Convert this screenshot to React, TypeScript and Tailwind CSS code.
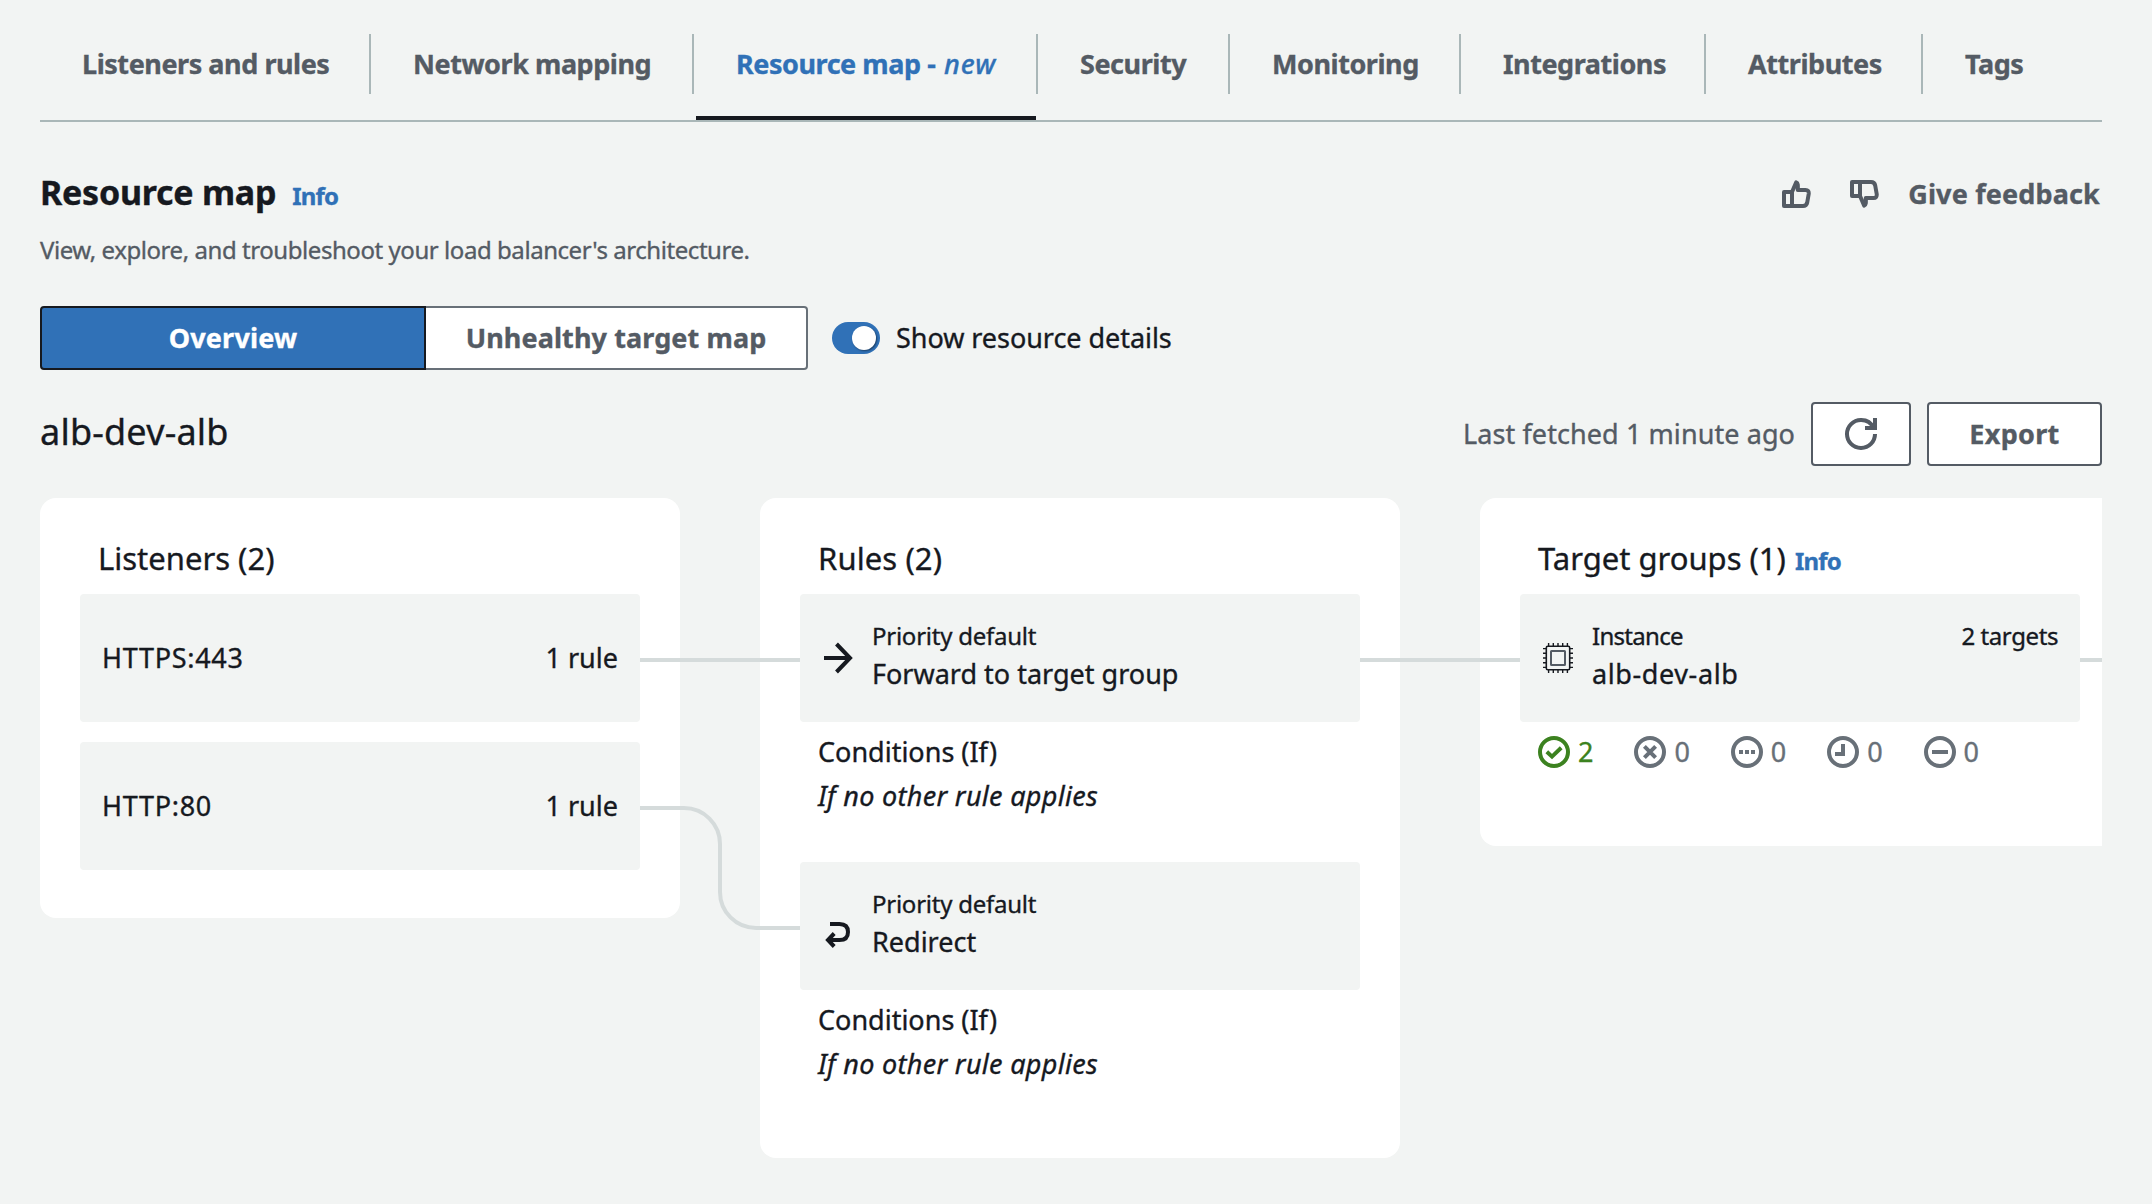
import type { ReactNode } from "react";

const tabs: { label: ReactNode; width: string; active?: boolean }[] = [
  { label: "Listeners and rules", width: "w-[331px]" },
  { label: "Network mapping", width: "w-[323px]" },
  {
    label: (
      <>
        Resource map - <em className="ml-[2px] font-medium tracking-[1.1px]">new</em>
      </>
    ),
    width: "w-[344px]",
    active: true,
  },
  { label: "Security", width: "w-[192px]" },
  { label: "Monitoring", width: "w-[231px]" },
  { label: "Integrations", width: "w-[245px]" },
  { label: "Attributes", width: "w-[217px]" },
  { label: "Tags", width: "w-[178px]" },
];

function Tabs() {
  return (
    <nav className="flex h-[122px] shrink-0 border-b-2 border-[#aab7b8]">
      {tabs.map((tab, i) => (
        <div key={i} className={`${tab.width} flex shrink-0 flex-col pt-[34px]`}>
          <div
            className={`flex h-[60px] items-center pl-[42px] text-[27px] font-bold tracking-[-0.45px] whitespace-nowrap ${
              tab.active ? "text-[#3071b7]" : "text-[#545b64]"
            } ${i < tabs.length - 1 ? "border-r-2 border-[#aab7b8]" : ""}`}
          >
            <span>{tab.label}</span>
          </div>
          {tab.active && <div className="mt-[22px] mr-[2px] ml-[2px] h-1 bg-[#16191f]" />}
        </div>
      ))}
    </nav>
  );
}

function ThumbIcon({ down = false }: { down?: boolean }) {
  return (
    <svg
      viewBox="0 0 29 28"
      className={`h-[28px] w-[29px] ${down ? "-scale-y-100" : ""}`}
      fill="none"
      stroke="#545b64"
      strokeWidth="4"
      strokeLinejoin="round"
    >
      <path d="M2 12H10L14.2 2.4C16 3 16 5 15.8 10H23.5C26 10 27 11.5 26.7 14L25.2 22.5C24.7 25 23.5 26 21 26H2Z" />
      <path d="M10 12V26" />
    </svg>
  );
}

function RefreshIcon() {
  return (
    <svg viewBox="0 0 16 16" className="size-8" fill="none" stroke="#545b64" strokeWidth="2">
      <path d="M10 5h5V0" />
      <path d="M15 8a6.957 6.957 0 0 1-7 7 6.957 6.957 0 0 1-7-7 6.957 6.957 0 0 1 7-7 6.87 6.87 0 0 1 6.3 4" />
    </svg>
  );
}

function ForwardIcon() {
  return (
    <svg viewBox="0 0 32 32" className="size-8" fill="none" stroke="#16191f" strokeWidth="4">
      <path d="M2 16H27M14.5 2L28 16L14.5 30" />
    </svg>
  );
}

function RedirectIcon() {
  return (
    <svg viewBox="0 0 32 32" className="size-8" fill="none" stroke="#16191f" strokeWidth="4">
      <path d="M8 6H17.5C23.5 6 26 9 26 14C26 19 23.5 22 17.5 22H7" />
      <path d="M12.2 15.5L6 22L12.2 28.5" />
    </svg>
  );
}

function ChipIcon() {
  const pins = [5.6, 10.3, 15, 19.7, 24.4];
  return (
    <svg viewBox="0 0 30 30" className="size-[30px]" fill="none" stroke="#16191f" strokeWidth="1.6">
      <rect x="3.3" y="3.3" width="23.4" height="23.4" rx="1.5" />
      <rect x="8" y="8" width="14" height="14" rx="0.5" stroke="#545b64" strokeWidth="2" />
      {pins.map((p) => (
        <path key={p} d={`M${p} 0V3M${p} 27V30M0 ${p}H3M27 ${p}H30`} strokeWidth="1.4" />
      ))}
    </svg>
  );
}

function Item({ children }: { children: ReactNode }) {
  return <div className="flex h-32 rounded bg-[#f2f4f3] pr-[22px] pl-5">{children}</div>;
}

function Card({ size, title, children }: { size: string; title: ReactNode; children: ReactNode }) {
  return (
    <section className={`${size} w-[640px] shrink-0 rounded-2xl bg-white px-10`}>
      <h3 className="h-24 pt-10 pl-[18px] text-[31px] leading-10 whitespace-nowrap">{title}</h3>
      {children}
    </section>
  );
}

function Listener({ name }: { name: string }) {
  return (
    <Item>
      <div className="flex flex-1 items-center justify-between pl-[2px] text-[27px]">
        <span className="tracking-[0.7px]">{name}</span>
        <span>1 rule</span>
      </div>
    </Item>
  );
}

function Rule({ icon, action }: { icon: ReactNode; action: string }) {
  return (
    <div className="mb-11">
      <Item>
        <div className="flex w-[52px] items-center pl-[2px]">{icon}</div>
        <div className="pt-6">
          <p className="text-[24px] leading-9 tracking-[-0.25px]">Priority default</p>
          <p className="text-[27px] leading-10">{action}</p>
        </div>
      </Item>
      <div className="pt-[7px] pl-[18px] text-[27px]">
        <p className="leading-[45px]">Conditions (If)</p>
        <p className="leading-[44px] tracking-[0.3px] italic">If no other rule applies</p>
      </div>
    </div>
  );
}

const statuses: { count: number; shape: ReactNode; color: string }[] = [
  { count: 2, shape: <path d="M4.4 7.9l2.6 2.4 4.6-4.4" />, color: "text-[#3c8220]" },
  { count: 0, shape: <path d="M10.8 5.2l-5.6 5.6M5.2 5.2l5.6 5.6" />, color: "text-[#687078]" },
  { count: 0, shape: <path d="M4 8h2M7 8h2M10 8h2" />, color: "text-[#687078]" },
  { count: 0, shape: <path d="M8 4v5H4" />, color: "text-[#687078]" },
  { count: 0, shape: <path d="M4 8h8" />, color: "text-[#687078]" },
];

function Connectors() {
  return (
    <svg
      className="pointer-events-none absolute top-0 left-0 h-[660px] w-[2062px]"
      viewBox="0 0 2062 660"
      fill="none"
      stroke="#d5dbdb"
      strokeWidth="4"
    >
      <path d="M600 162H760M1320 162H1480M2040 162H2062" />
      <path d="M600 310H644A36 36 0 0 1 680 346V394A36 36 0 0 0 716 430H760" />
    </svg>
  );
}

export default function App() {
  return (
    <main className="flex h-[1204px] w-[2152px] flex-col overflow-hidden bg-[#f2f4f3] pr-[50px] pl-10 font-['Noto_Sans',sans-serif] text-[#16191f] [-webkit-text-stroke:0.35px]">
      <Tabs />

      <header className="mt-12 flex h-11 shrink-0 items-center justify-between">
        <div className="flex items-baseline">
          <h1 className="text-[34px] leading-[44px] font-bold tracking-[-0.25px]">Resource map</h1>
          <a className="ml-4 text-[24px] font-bold tracking-[-0.8px] text-[#3071b7]">Info</a>
        </div>
        <div className="flex items-center pt-1 pr-[2px]">
          <ThumbIcon />
          <span className="w-[39px]" />
          <ThumbIcon down />
          <span className="ml-[29px] text-[27px] leading-10 font-bold tracking-[0.15px] text-[#545b64]">
            Give feedback
          </span>
        </div>
      </header>
      <p className="mt-[18px] text-[24px] leading-9 tracking-[-0.44px] text-[#545b64]">
        View, explore, and troubleshoot your load balancer's architecture.
      </p>

      <div className="mt-[38px] flex h-16 shrink-0 items-center text-[27px]">
        <button className="h-16 w-[386px] rounded-l border-2 border-[#16191f] bg-[#3071b7] font-bold tracking-[0.2px] text-white">
          Overview
        </button>
        <button className="h-16 w-[382px] rounded-r border-2 border-l-0 border-[#687078] bg-white font-bold tracking-[0.1px] text-[#545b64]">
          Unhealthy target map
        </button>
        <span className="ml-6 flex h-8 w-12 items-center justify-end rounded-full bg-[#3071b7] pr-1">
          <span className="size-6 rounded-full bg-white shadow-[1px_1px_2px_rgba(0,0,0,0.45)]" />
        </span>
        <span className="ml-4 tracking-[-0.05px]">Show resource details</span>
      </div>

      <div className="mt-8 flex h-16 shrink-0 items-center">
        <h2 className="flex-1 pb-1 text-[36px] leading-[44px] tracking-[0.2px]">alb-dev-alb</h2>
        <span className="text-[27px] tracking-[0.08px] text-[#545b64]">Last fetched 1 minute ago</span>
        <button className="ml-4 flex h-16 w-[100px] items-center justify-center rounded border-2 border-[#545b64] bg-white">
          <RefreshIcon />
        </button>
        <button className="ml-4 h-16 w-[175px] rounded border-2 border-[#545b64] bg-white text-[27px] font-bold tracking-[0.3px] text-[#545b64]">
          Export
        </button>
      </div>

      <div className="relative mt-8 flex shrink-0 items-start gap-20 overflow-hidden">
        <Card size="h-[420px]" title="Listeners (2)">
          <div className="flex flex-col gap-5">
            <Listener name="HTTPS:443" />
            <Listener name="HTTP:80" />
          </div>
        </Card>

        <Card size="h-[660px]" title={<span className="tracking-[0.1px]">Rules (2)</span>}>
          <Rule icon={<ForwardIcon />} action="Forward to target group" />
          <Rule
            icon={
              <span className="pt-4">
                <RedirectIcon />
              </span>
            }
            action="Redirect"
          />
        </Card>

        <Card
          size="h-[348px]"
          title={
            <span>
              Target groups (1)
              <a className="ml-[9px] text-[24px] font-bold tracking-[-0.8px] text-[#3071b7]">Info</a>
            </span>
          }
        >
          <Item>
            <div className="flex w-[52px] items-center pl-[3px]">
              <ChipIcon />
            </div>
            <div className="flex-1 pt-6">
              <p className="flex justify-between text-[24px] leading-9 tracking-[-0.4px]">
                <span className="tracking-[-0.7px]">Instance</span>
                <span>2 targets</span>
              </p>
              <p className="text-[27px] leading-10 tracking-[0.6px]">alb-dev-alb</p>
            </div>
          </Item>
          <div className="flex pt-[10px] pl-[18px] text-[27px] leading-10">
            {statuses.map((s, i) => (
              <div key={i} className={`flex w-[96.4px] items-center gap-2 ${s.color}`}>
                <svg viewBox="0 0 16 16" className="size-8" fill="none" stroke="currentColor" strokeWidth="2">
                  <circle cx="8" cy="8" r="7" />
                  {s.shape}
                </svg>
                <span>{s.count}</span>
              </div>
            ))}
          </div>
        </Card>
        <Connectors />
      </div>
    </main>
  );
}
